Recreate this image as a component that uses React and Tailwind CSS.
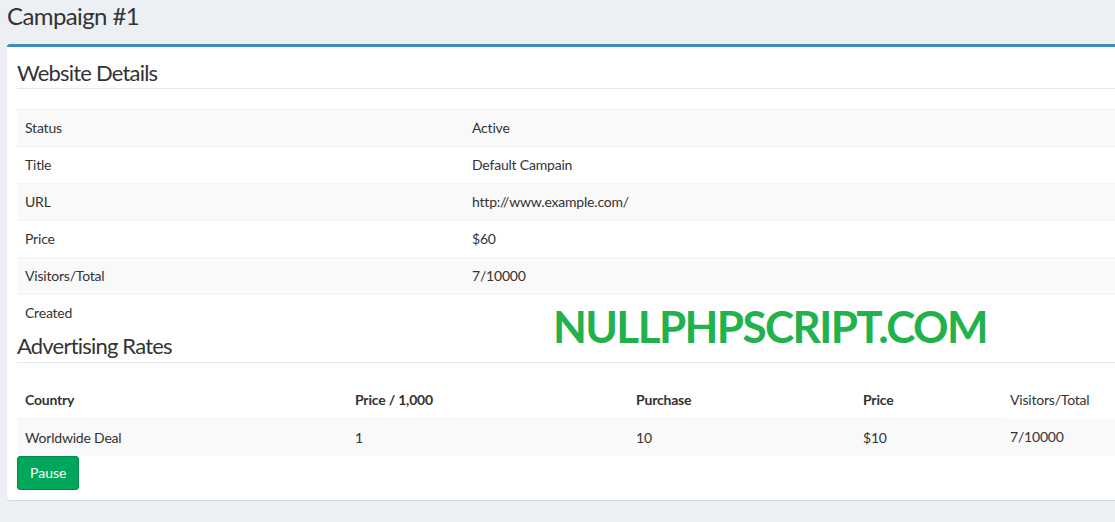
import React from "react";

const DETAILS = [
  ["Status", "Active"],
  ["Title", "Default Campain"],
  ["URL", "http://www.example.com/"],
  ["Price", "$60"],
  ["Visitors/Total", "7/10000"],
  ["Created", ""],
];

const font = { fontFamily: "Lato, 'Noto Sans', sans-serif" };

export default function App() {
  return (
    <div className="relative h-[522px] w-[1115px] overflow-hidden bg-[#ecf0f5] text-[#333]" style={font}>
      <section className="px-[7px] pt-[3px]">
        <h1 className="m-0 text-[24px] leading-[26px] tracking-[-0.6px] text-[#333]">Campaign #1</h1>
      </section>

      <div className="ml-[7px] mt-[15px] w-[1130px] rounded-[3px] border-t-[3px] border-[#3c8dbc] bg-white px-[10px] pb-[10px] shadow-[0_1px_1px_rgba(0,0,0,0.1)]">
        <h3 className="border-b border-[#e5e5e5] pb-[2px] pt-[13px] text-[22px] leading-[26px] tracking-[-0.8px] text-[#333]">
          Website Details
        </h3>
        <table className="mt-[20px] w-full border-collapse text-[14px] leading-[20px] tracking-[-0.2px]">
          <tbody>
            {DETAILS.map(([k, v], i) => (
              <tr key={k} className={i % 2 === 0 ? "bg-[#f9f9f9]" : "bg-white"}>
                <td className="h-[37px] w-[447px] border-t border-[#f4f4f4] px-[8px] align-middle">{k}</td>
                <td className="h-[37px] border-t border-[#f4f4f4] px-[8px] align-middle">{v}</td>
              </tr>
            ))}
          </tbody>
        </table>

        <h3 className="border-b border-[#e5e5e5] pb-[3px] pt-[1px] text-[22px] leading-[26px] tracking-[-0.8px] text-[#333]">
          Advertising Rates
        </h3>
        <table className="mt-[19px] w-full border-collapse text-[14px] leading-[20px] tracking-[-0.2px]">
          <thead>
            <tr>
              <th className="h-[37px] w-[330px] border-b-2 border-[#f4f4f4] px-[8px] text-left font-bold">Country</th>
              <th className="h-[37px] w-[281px] border-b-2 border-[#f4f4f4] px-[8px] text-left font-bold">Price / 1,000</th>
              <th className="h-[37px] w-[227px] border-b-2 border-[#f4f4f4] px-[8px] text-left font-bold">Purchase</th>
              <th className="h-[37px] w-[147px] border-b-2 border-[#f4f4f4] px-[8px] text-left font-bold">Price</th>
              <td className="h-[37px] px-[8px]">Visitors/Total</td>
            </tr>
          </thead>
          <tbody>
            <tr className="bg-[#f9f9f9]">
              <td className="h-[37px] px-[8px]">Worldwide Deal</td>
              <td className="h-[37px] px-[8px]">1</td>
              <td className="h-[37px] px-[8px]">10</td>
              <td className="h-[37px] px-[8px]">$10</td>
              <td className="h-[37px] px-[8px]">7/10000</td>
            </tr>
          </tbody>
        </table>

        <button className="h-[34px] rounded-[3px] border border-[#008d4c] bg-[#00a65a] px-[12px] text-[14px] text-white">
          Pause
        </button>
      </div>

      <div className="absolute left-[553px] top-[300px] text-[44px] font-bold leading-[52px] tracking-[-1.6px] text-[#22b24c]">
        NULLPHPSCRIPT.COM
      </div>
    </div>
  );
}
